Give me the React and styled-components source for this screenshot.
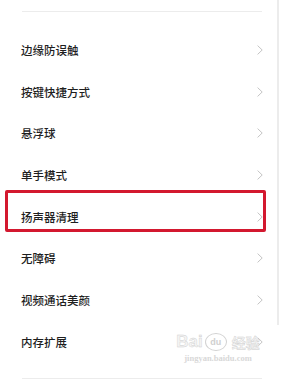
import React from "react";
import styled, { createGlobalStyle } from "styled-components";

const GlobalStyle = createGlobalStyle`
  html, body {
    margin: 0;
    padding: 0;
    background: #ffffff;
  }
  body {
    font-family: "Noto Sans CJK SC", "Noto Sans", sans-serif;
  }
`;

const Screen = styled.div`
  position: relative;
  width: 290px;
  height: 389px;
  overflow: hidden;
  background: #ffffff;
  padding-top: 11px;
  box-sizing: border-box;
`;

const Divider = styled.div`
  height: 1px;
  margin: 0 28px 0 22px;
  background: #ececec;
`;

const List = styled.div`
  display: flex;
  flex-direction: column;
  padding: 17px 0 15px;
`;

const Row = styled.div`
  position: relative;
  display: flex;
  align-items: center;
  justify-content: space-between;
  height: 41.7px;
  padding: 0 27px 0 21px;
  font-size: 11.5px;
  font-weight: 500;
  color: #1e1e1e;
  letter-spacing: 0;
`;

const Chevron = styled.svg`
  width: 6px;
  height: 10px;
  flex: none;
`;

const Highlight = styled.div`
  position: absolute;
  left: 5px;
  right: 24px;
  top: -6px;
  bottom: 5px;
  border: 3px solid #d3182f;
  border-radius: 2px;
`;

const Scrollbar = styled.div`
  position: absolute;
  left: 277px;
  top: 0;
  width: 2px;
  height: 325px;
  background: #ececec;
`;

const Watermark = styled.div`
  position: absolute;
  left: 173px;
  top: 333px;
  width: 90px;
  display: flex;
  flex-direction: column;
  align-items: center;
  color: #d6d6d6;
  font-family: "Liberation Sans", sans-serif;
  pointer-events: none;
`;

const Brand = styled.div`
  display: flex;
  align-items: center;
  gap: 2px;
  font-size: 17px;
  font-weight: 700;
  line-height: 18px;
  -webkit-text-stroke: 0.4px #cfcfcf;
  color: #f4f4f4;
`;

const Paw = styled.span`
  display: inline-flex;
  align-items: center;
  justify-content: center;
  width: 20px;
  height: 16px;
  border: 1.5px solid #d2d2d2;
  border-radius: 50%;
  font-size: 9px;
  color: #cfcfcf;
  -webkit-text-stroke: 0;
`;

const Jy = styled.span`
  font-family: "Noto Sans CJK SC", sans-serif;
  font-size: 14px;
  margin-left: 3px;
`;

const Url = styled.div`
  font-size: 8.5px;
  font-family: "Liberation Serif", serif;
  font-weight: 700;
  margin-top: 2px;
  color: #d8d8d8;
`;

const items = [
  "边缘防误触",
  "按键快捷方式",
  "悬浮球",
  "单手模式",
  "扬声器清理",
  "无障碍",
  "视频通话美颜",
  "内存扩展",
];

const App = () => {
  return (
    <Screen>
      <GlobalStyle />
      <Divider />
      <List>
        {items.map((label) => (
          <Row key={label}>
            <span>{label}</span>
            <Chevron viewBox="0 0 6 10">
              <path d="M0.6 0.6 L5.2 5 L0.6 9.4" fill="none" stroke="#bdbdbd" strokeWidth="0.9" />
            </Chevron>
            {label === "扬声器清理" && <Highlight />}
          </Row>
        ))}
      </List>
      <Divider />
      <Scrollbar />
      <Watermark>
        <Brand>
          Bai<Paw>du</Paw>
          <Jy>经验</Jy>
        </Brand>
        <Url>jingyan.baidu.com</Url>
      </Watermark>
    </Screen>
  );
};

export default App;
